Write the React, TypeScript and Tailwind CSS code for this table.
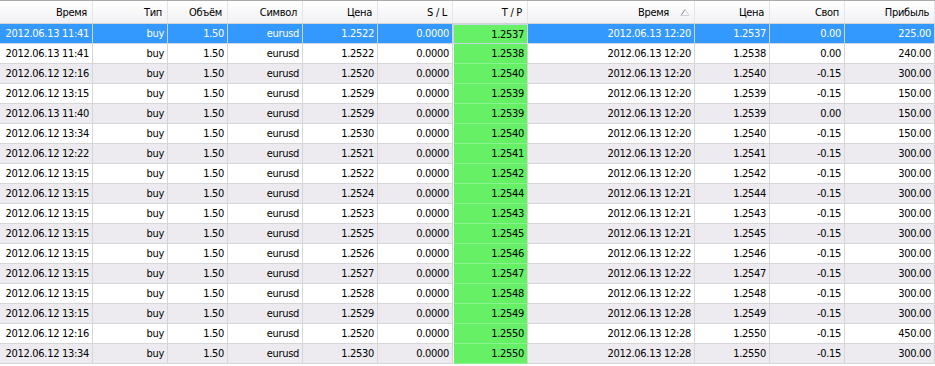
import React from "react";

const headers = ["Время", "Тип", "Объём", "Символ", "Цена", "S / L", "T / P", "Время", "Цена", "Своп", "Прибыль"];

type Row = [string, string, string, string, string, string, string];
// open time, price, tp, close time, close price, swap, profit
const data: Row[] = [
  ["2012.06.13 11:41", "1.2522", "1.2537", "2012.06.13 12:20", "1.2537", "0.00", "225.00"],
  ["2012.06.13 11:41", "1.2522", "1.2538", "2012.06.13 12:20", "1.2538", "0.00", "240.00"],
  ["2012.06.12 12:16", "1.2520", "1.2540", "2012.06.13 12:20", "1.2540", "-0.15", "300.00"],
  ["2012.06.12 13:15", "1.2529", "1.2539", "2012.06.13 12:20", "1.2539", "-0.15", "150.00"],
  ["2012.06.13 11:40", "1.2529", "1.2539", "2012.06.13 12:20", "1.2539", "0.00", "150.00"],
  ["2012.06.12 13:34", "1.2530", "1.2540", "2012.06.13 12:20", "1.2540", "-0.15", "150.00"],
  ["2012.06.12 12:22", "1.2521", "1.2541", "2012.06.13 12:20", "1.2541", "-0.15", "300.00"],
  ["2012.06.12 13:15", "1.2522", "1.2542", "2012.06.13 12:20", "1.2542", "-0.15", "300.00"],
  ["2012.06.12 13:15", "1.2524", "1.2544", "2012.06.13 12:21", "1.2544", "-0.15", "300.00"],
  ["2012.06.12 13:15", "1.2523", "1.2543", "2012.06.13 12:21", "1.2543", "-0.15", "300.00"],
  ["2012.06.12 13:15", "1.2525", "1.2545", "2012.06.13 12:21", "1.2545", "-0.15", "300.00"],
  ["2012.06.12 13:15", "1.2526", "1.2546", "2012.06.13 12:22", "1.2546", "-0.15", "300.00"],
  ["2012.06.12 13:15", "1.2527", "1.2547", "2012.06.13 12:22", "1.2547", "-0.15", "300.00"],
  ["2012.06.12 13:15", "1.2528", "1.2548", "2012.06.13 12:22", "1.2548", "-0.15", "300.00"],
  ["2012.06.12 13:15", "1.2529", "1.2549", "2012.06.13 12:28", "1.2549", "-0.15", "300.00"],
  ["2012.06.12 12:16", "1.2520", "1.2550", "2012.06.13 12:28", "1.2550", "-0.15", "450.00"],
  ["2012.06.12 13:34", "1.2530", "1.2550", "2012.06.13 12:28", "1.2550", "-0.15", "300.00"],
];

const gridCols = "grid grid-cols-[93px_75px_60px_75px_75px_75px_75px_167px_75px_75px_90px]";

export default function App() {
  return (
    <div
      className="w-[935px] h-[366px] overflow-hidden bg-white text-[11px] tracking-[-0.3px] text-black"
      style={{ fontFamily: '"DejaVu Sans Condensed", "DejaVu Sans", sans-serif' }}
    >
      <div className={`${gridCols} h-[24px] border-t border-[#a9a9a9] bg-gradient-to-b from-white to-[#f1f1f5] border-b border-b-[#d5d5d5]`}>
        {headers.map((h, i) => (
          <div
            key={i}
            className={`relative flex items-center justify-end whitespace-nowrap border-r border-[#e3e3e8] leading-none ${i === 7 ? "pr-[25px]" : "pr-[5px]"}`}
          >
            {h}
            {i === 7 && (
              <svg className="absolute right-[4px] top-[8px]" width="10" height="7" viewBox="0 0 10 7">
                <path d="M1 6.5 L5 0.5" stroke="#8a8a8a" strokeWidth="1" fill="none" />
                <path d="M5 0.5 L9 6.5 L1 6.5" stroke="#d0d0d8" strokeWidth="1" fill="none" />
              </svg>
            )}
          </div>
        ))}
      </div>
      {data.map((r, idx) => {
        const selected = idx === 0;
        const grey = idx % 2 === 0;
        const rowBg = selected ? "bg-[#3399ff] text-white" : grey ? "bg-[#edebf0]" : "bg-white";
        const cells = [r[0], "buy", "1.50", "eurusd", r[1], "0.0000", r[2], r[3], r[4], r[5], r[6]];
        return (
          <div key={idx} className={`${gridCols} h-[20px] ${rowBg}`}>
            {cells.map((c, i) => {
              const isTp = i === 6;
              return (
                <div
                  key={i}
                  className={`flex items-center justify-end whitespace-nowrap pr-[3px] border-r border-b leading-none ${
                    selected ? "border-[#c9d6e6]" : "border-[#d6d6d6]"
                  } ${isTp ? (selected ? "bg-[#66f066] text-black border border-[#6fa8ec]" : "bg-[#66f066] border-l border-l-white border-b-[#8cf08c]") : ""}`}
                >
                  {c}
                </div>
              );
            })}
          </div>
        );
      })}
    </div>
  );
}
